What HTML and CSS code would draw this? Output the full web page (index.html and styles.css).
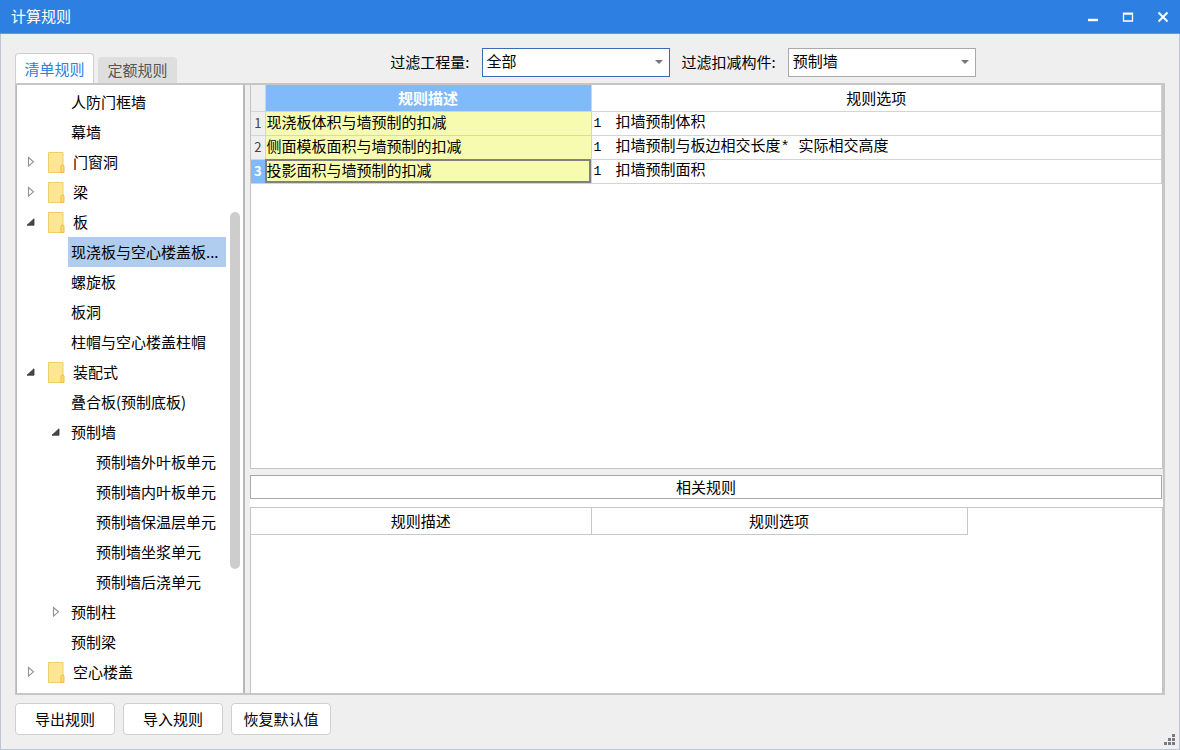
FILE: index.html
```html
<!DOCTYPE html>
<html lang="zh-CN">
<head>
<meta charset="utf-8">
<meta name="viewport" content="width=device-width, initial-scale=1">
<title>计算规则</title>
<link rel="stylesheet" href="styles.css">
</head>
<body>
<div class="window">
  <header class="titlebar">
    <h1 class="title">计算规则</h1>
    <div class="window-controls">
      <button class="control" type="button" aria-label="最小化"><svg width="12" height="12" viewBox="0 0 12 12"><path d="M1 9h10" stroke="#fff" stroke-width="2.4"/></svg></button>
      <button class="control" type="button" aria-label="最大化"><svg width="12" height="12" viewBox="0 0 12 12"><path d="M1.5 2.5h9v7.5h-9z" fill="none" stroke="#fff" stroke-width="1.3"/><path d="M1 2.7h10" stroke="#fff" stroke-width="2"/></svg></button>
      <button class="control" type="button" aria-label="关闭"><svg width="12" height="12" viewBox="0 0 12 12"><path d="M1.5 1.5l9 9M10.5 1.5l-9 9" stroke="#fff" stroke-width="1.9"/></svg></button>
    </div>
  </header>

  <main class="content">
    <div class="toolbar">
      <div class="tabs" role="tablist">
        <button class="tab tab-active" type="button" role="tab" aria-selected="true">清单规则</button>
        <button class="tab" type="button" role="tab" aria-selected="false">定额规则</button>
      </div>
      <div class="filters">
        <div class="filter">
          <label for="quantity">过滤工程量:</label>
          <div class="select-box">
            <select class="select select-focus" id="quantity"><option>全部</option></select>
            <svg class="select-arrow" width="8" height="4" viewBox="0 0 8 4"><path d="M0 0h8L4 4z" fill="#777"/></svg>
          </div>
        </div>
        <div class="filter">
          <label for="component">过滤扣减构件:</label>
          <div class="select-box">
            <select class="select" id="component"><option>预制墙</option></select>
            <svg class="select-arrow" width="8" height="4" viewBox="0 0 8 4"><path d="M0 0h8L4 4z" fill="#777"/></svg>
          </div>
        </div>
      </div>
    </div>

    <svg class="symbols" width="0" height="0" aria-hidden="true">
      <symbol id="closed" viewBox="0 0 8 12"><path d="M1.5 1.5v8.5l5-4.2z" fill="#fff" stroke="#929292" stroke-width="1.1"/></symbol>
      <symbol id="open" viewBox="0 0 9 9"><path d="M8 .8v6.4H1z" fill="#484848" stroke="#303030" stroke-width=".8"/></symbol>
      <symbol id="folder" viewBox="0 0 17 21"><path d="M.5.5h14.500v20H.5z" fill="#ffe694" stroke="#efce62"/><path d="M13 20.500v-6q0-1.500 1.500-1.500t1.500 1.500v6z" fill="#ffdc70" stroke="#e9bd4c"/></symbol>
    </svg>

    <div class="panel">
      <nav class="tree-pane" aria-label="构件">
        <ul class="tree">
          <li><ul class="branch">
            <li class="row"><span class="toggle"></span><button class="node" type="button">人防门框墙</button></li>
            <li class="row"><span class="toggle"></span><button class="node" type="button">幕墙</button></li>
          </ul></li>
          <li class="row"><button class="toggle" type="button" aria-label="展开"><svg width="8" height="12"><use href="#closed"/></svg></button><button class="node node-folder" type="button"><svg width="17" height="21"><use href="#folder"/></svg>门窗洞</button></li>
          <li class="row"><button class="toggle" type="button" aria-label="展开"><svg width="8" height="12"><use href="#closed"/></svg></button><button class="node node-folder" type="button"><svg width="17" height="21"><use href="#folder"/></svg>梁</button></li>
          <li>
            <div class="row"><button class="toggle" type="button" aria-label="折叠"><svg width="9" height="9"><use href="#open"/></svg></button><button class="node node-folder" type="button"><svg width="17" height="21"><use href="#folder"/></svg>板</button></div>
            <ul class="branch">
              <li class="row"><span class="toggle"></span><button class="node node-selected" type="button">现浇板与空心楼盖板...</button></li>
              <li class="row"><span class="toggle"></span><button class="node" type="button">螺旋板</button></li>
              <li class="row"><span class="toggle"></span><button class="node" type="button">板洞</button></li>
              <li class="row"><span class="toggle"></span><button class="node" type="button">柱帽与空心楼盖柱帽</button></li>
            </ul>
          </li>
          <li>
            <div class="row"><button class="toggle" type="button" aria-label="折叠"><svg width="9" height="9"><use href="#open"/></svg></button><button class="node node-folder" type="button"><svg width="17" height="21"><use href="#folder"/></svg>装配式</button></div>
            <ul class="branch">
              <li class="row"><span class="toggle"></span><button class="node" type="button">叠合板(预制底板)</button></li>
              <li>
                <div class="row"><button class="toggle" type="button" aria-label="折叠"><svg width="9" height="9"><use href="#open"/></svg></button><button class="node" type="button">预制墙</button></div>
                <ul class="branch">
                  <li class="row"><span class="toggle"></span><button class="node" type="button">预制墙外叶板单元</button></li>
                  <li class="row"><span class="toggle"></span><button class="node" type="button">预制墙内叶板单元</button></li>
                  <li class="row"><span class="toggle"></span><button class="node" type="button">预制墙保温层单元</button></li>
                  <li class="row"><span class="toggle"></span><button class="node" type="button">预制墙坐浆单元</button></li>
                  <li class="row"><span class="toggle"></span><button class="node" type="button">预制墙后浇单元</button></li>
                </ul>
              </li>
              <li class="row"><button class="toggle" type="button" aria-label="展开"><svg width="8" height="12"><use href="#closed"/></svg></button><button class="node" type="button">预制柱</button></li>
              <li class="row"><span class="toggle"></span><button class="node" type="button">预制梁</button></li>
            </ul>
          </li>
          <li class="row"><button class="toggle" type="button" aria-label="展开"><svg width="8" height="12"><use href="#closed"/></svg></button><button class="node node-folder" type="button"><svg width="17" height="21"><use href="#folder"/></svg>空心楼盖</button></li>
        </ul>
        <div class="scroll-track"><div class="scroll-before"></div><div class="scroll-thumb"></div><div class="scroll-after"></div></div>
      </nav>

      <div class="details">
        <section class="rules">
          <table class="grid">
            <colgroup><col class="col-index"><col class="col-text"><col></colgroup>
            <thead><tr><td class="corner"></td><th class="head-active" scope="col">规则描述</th><th scope="col">规则选项</th></tr></thead>
            <tbody>
              <tr><th class="index" scope="row">1</th><td class="desc">现浇板体积与墙预制的扣减</td><td class="option"><span class="number">1</span>扣墙预制体积</td></tr>
              <tr><th class="index" scope="row">2</th><td class="desc">侧面模板面积与墙预制的扣减</td><td class="option"><span class="number">1</span>扣墙预制与板边相交长度* 实际相交高度</td></tr>
              <tr><th class="index index-active" scope="row">3</th><td class="desc desc-active">投影面积与墙预制的扣减</td><td class="option"><span class="number">1</span>扣墙预制面积</td></tr>
            </tbody>
          </table>
        </section>
        <h2 class="related-title">相关规则</h2>
        <section class="related">
          <table class="related-grid">
            <thead><tr><th class="related-desc" scope="col">规则描述</th><th class="related-option" scope="col">规则选项</th></tr></thead>
          </table>
        </section>
      </div>
    </div>
  </main>

  <footer class="footer">
    <div class="actions">
      <button class="action" type="button">导出规则</button>
      <button class="action" type="button">导入规则</button>
      <button class="action" type="button">恢复默认值</button>
    </div>
    <svg class="grip" width="11" height="11" viewBox="0 0 11 11" fill="#777b85"><path d="M8 0h3v3H8zM4 4h3v3H4zM8 4h3v3H8zM0 8h3v3H0zM4 8h3v3H4zM8 8h3v3H8z"/></svg>
  </footer>
</div>
</body>
</html>
```
FILE: styles.css
```css
* { box-sizing: border-box; }

body {
  margin: 0;
  font: 15px/20px "Noto Sans CJK SC", sans-serif;
  color: #000;
  background: #efefef;
}

button, select {
  font: inherit;
  color: inherit;
  margin: 0;
  padding: 0;
  border: 0;
  background: none;
}

ul { list-style: none; margin: 0; padding: 0; }

.window { display: flex; flex-direction: column; min-height: 100vh; }

.titlebar {
  display: flex;
  justify-content: space-between;
  align-items: center;
  height: 34px;
  padding: 0 11px;
  background: #2d7fe2;
  border-bottom: 1px solid #5a9bea;
  color: #fff;
}

.title { margin: 0; padding-bottom: 2px; font-size: 15px; font-weight: 400; }
.window-controls { display: flex; gap: 23px; }
.control { display: flex; }

.content {
  flex: 1;
  display: flex;
  flex-direction: column;
  padding: 0 14px;
  border: solid #bcc6d6;
  border-width: 0 1px;
}

.toolbar { display: flex; align-items: flex-end; height: 49px; }
.tabs { display: flex; align-items: flex-end; gap: 4px; }

.tab {
  width: 79px;
  height: 26px;
  border-radius: 4px 4px 0 0;
  background: #dedede;
  color: #555;
}

.tab-active {
  height: 30px;
  border: 1px solid #cfcfcf;
  border-bottom: 0;
  background: #fff;
  color: #2d7fe2;
}

.filters {
  flex: 1;
  align-self: stretch;
  display: flex;
  align-items: center;
  justify-content: center;
  gap: 12px;
  padding: 7px 0 0 24px;
}

.filter { display: flex; align-items: center; gap: 12px; }
.select-box { position: relative; }

.select {
  display: block;
  appearance: none;
  width: 188px;
  height: 29px;
  padding: 0 4px 2px;
  border: 1px solid #a9a9a9;
  background: #fff;
}

.select-focus { border-color: #3b6bb0; }
.select-arrow { position: absolute; right: 7px; top: 12px; pointer-events: none; }
.symbols { display: block; }

.panel {
  flex: 1;
  display: flex;
  gap: 5px;
  border: 2px solid #c4c6c8;
  border-left-width: 1px;
}

.tree-pane {
  width: 229px;
  display: flex;
  justify-content: space-between;
  padding: 2px 3px 3px 1px;
  border: solid #b8b8b8;
  border-width: 0 2px 0 1px;
  background: #fff;
}

.branch { padding-left: 25px; }
.row { display: flex; align-items: center; height: 30px; }
.toggle { width: 25px; display: flex; justify-content: center; }

.node {
  display: flex;
  align-items: center;
  height: 30px;
  padding: 0 3px;
  white-space: nowrap;
}

.node-folder { gap: 8px; padding-left: 5px; }
.node-selected { width: 158px; background: #b0ccee; }

.scroll-track { display: flex; flex-direction: column; width: 10px; }
.scroll-before { flex: 125; }
.scroll-thumb { flex: 356; border-radius: 5px; background: #cdcdcd; }
.scroll-after { flex: 121; }

.details { flex: 1; display: flex; flex-direction: column; min-width: 0; }

.rules {
  flex: 384;
  border: 1px solid #c4c4c4;
  border-width: 0 1px 1px;
  background: #fff;
}

.grid { width: 100%; table-layout: fixed; border-collapse: collapse; }
.col-index { width: 14px; }
.col-text { width: 326px; }

.grid th, .grid td {
  height: 24px;
  padding: 0;
  border: solid #d4d4d4;
  border-width: 0 1px 1px 0;
  font-weight: 400;
  line-height: 20px;
  white-space: nowrap;
}

.grid thead th, .grid .corner { height: 26px; }
.grid .corner { background: #efefef; }
.grid .head-active { background: #80bafa; color: #fff; font-weight: 700; }
.grid .index { background: #efefef; color: #444; font-size: 13px; }
.grid .index-active { background: #80bafa; color: #fff; font-weight: 700; }
.grid .desc { padding: 0 0 3px 1px; background: #f7fbb0; }
.grid .desc-active { outline: 2px solid #808080; outline-offset: -2px; }
.grid .option { padding: 1px 0 0 2px; font-family: "Liberation Mono", "Noto Sans CJK SC", monospace; }
.number { display: inline-block; width: 22px; font-size: 13px; }

.related-title {
  height: 24px;
  margin: 6px 1px 0 0;
  border: 1px solid #a8a8a8;
  background: #fff;
  font-size: 15px;
  font-weight: 400;
  line-height: 22px;
  text-align: center;
}

.related {
  flex: 186;
  border: 1px solid #c4c4c4;
  border-bottom: 0;
  margin-top: 8px;
  background: #fff;
  box-shadow: 0 -8px #fff;
}

.related-grid { table-layout: fixed; border-collapse: collapse; }

.related-grid th {
  height: 27px;
  padding: 0;
  border: solid #c8c8c8;
  border-width: 0 1px 1px 0;
  font-weight: 400;
}

.related-desc { width: 340px; }
.related-option { width: 376px; }

.footer {
  display: flex;
  justify-content: space-between;
  padding: 8px 4px 14px 14px;
  border: solid #bcc6d6;
  border-width: 0 1px 1px;
}

.actions { display: flex; gap: 8px; }

.action {
  width: 100px;
  height: 32px;
  border: 1px solid #cfcfcf;
  border-radius: 4px;
  background: #fff;
}

.grip { align-self: flex-end; margin-bottom: -10px; }
```
